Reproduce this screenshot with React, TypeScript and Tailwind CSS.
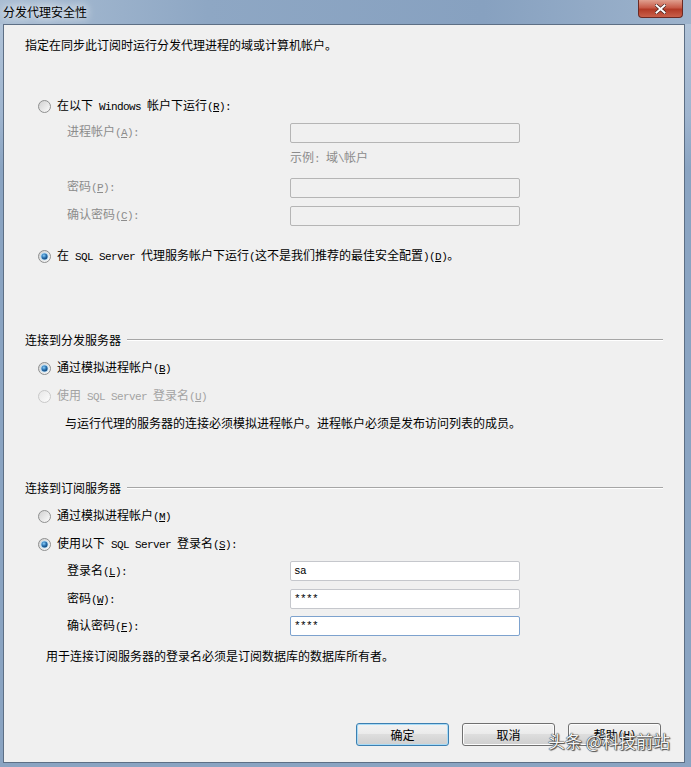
import React, { useId } from 'react';

const cjk = "font-['Noto_Sans_CJK_SC',sans-serif]";

// half-width ascii run, SimSun style (6px per char)
const A: React.FC<{ children: React.ReactNode }> = ({ children }) => (
  <span className="font-['Liberation_Mono',monospace] text-[11px] tracking-[-0.6px] whitespace-pre">{children}</span>
);

const Key: React.FC<{ k: string }> = ({ k }) => (
  <A>
    (<u className="underline-offset-1">{k}</u>)
  </A>
);

const Radio: React.FC<{ checked?: boolean; disabled?: boolean }> = ({ checked, disabled }) => {
  const id = useId().replace(/:/g, '');
  return (
    <svg width="13" height="13" viewBox="0 0 13 13" className="shrink-0">
      <defs>
        <linearGradient id={`f${id}`} x1="0" y1="0" x2="1" y2="1">
          <stop offset="0" stopColor={disabled ? '#e6e6e6' : '#cfcfcf'} />
          <stop offset="1" stopColor="#fdfdfd" />
        </linearGradient>
        <radialGradient id={`d${id}`} cx="0.4" cy="0.35" r="0.7">
          <stop offset="0" stopColor="#8fd0f7" />
          <stop offset="0.5" stopColor="#2f78b7" />
          <stop offset="1" stopColor="#0c3a6a" />
        </radialGradient>
      </defs>
      <circle cx="6.5" cy="6.5" r="6" fill={`url(#f${id})`} stroke={disabled ? '#c8c8c8' : '#8e8f8f'} />
      {checked && (
        <>
          <circle cx="6.5" cy="6.5" r="3.8" fill="#a9d7f5" />
          <circle cx="6.5" cy="6.5" r="3" fill={`url(#d${id})`} />
        </>
      )}
    </svg>
  );
};

const RadioRow: React.FC<{
  checked?: boolean;
  disabled?: boolean;
  mt: string;
  children: React.ReactNode;
}> = ({ checked, disabled, mt, children }) => (
  <div className={`${mt} h-[16px] flex items-center pl-[13px]`}>
    <Radio checked={checked} disabled={disabled} />
    <span className={`ml-[6px] whitespace-nowrap ${disabled ? 'text-[#a3a3a3]' : 'text-black'}`}>
      {children}
    </span>
  </div>
);

const GroupHeader: React.FC<{ title: string; mt: string }> = ({ title, mt }) => (
  <div className={`${mt} h-[16px] flex items-center pr-[21px]`}>
    <span className="whitespace-nowrap">{title}</span>
    <div className="flex-1 ml-[6px] h-px bg-[#a6a6a6] border-b border-white box-content" />
  </div>
);

const Field: React.FC<{
  label: React.ReactNode;
  mt: string;
  disabled?: boolean;
  value?: string;
  focused?: boolean;
  top?: boolean;
}> = ({ label, mt, disabled, value, focused, top }) => (
  <div className={`${mt} h-[20px] flex ${top ? 'items-start' : 'items-center'} pl-[42px]`}>
    <span className={`w-[223px] whitespace-nowrap leading-[16px] ${disabled ? 'text-[#8c8c8c]' : 'text-black'}`}>
      {label}
    </span>
    <div
      className={`w-[230px] h-[20px] rounded-[2px] border flex items-center px-[3px] ${
        disabled
          ? 'bg-[#f0f0f0] border-[#b5b5b5]'
          : focused
            ? 'bg-white border-[#7da2ce]'
            : 'bg-white border-[#c5c7cc]'
      }`}
    >
      {value && <A>{value}</A>}
    </div>
  </div>
);

const Button: React.FC<{ label: React.ReactNode; primary?: boolean }> = ({ label, primary }) => (
  <div
    className={`w-[93px] h-[23px] rounded-[3px] border flex items-center justify-center bg-[linear-gradient(#f2f2f2_0%,#ebebeb_45%,#dddddd_50%,#cfcfcf_100%)] ${
      primary ? 'border-[#3c7fb1] shadow-[inset_0_0_0_1px_#a8dbf6]' : 'border-[#707070] shadow-[inset_0_0_0_1px_#fcfcfc]'
    }`}
  >
    {label}
  </div>
);

export default function App() {
  return (
    <div
      className={`relative w-[691px] h-[767px] flex flex-col bg-[linear-gradient(#b4c6da_0%,#9fb5cf_15%,#8aa4c2_22%,#8aa4c2_100%)] text-[12px] text-black ${cjk}`}
    >
      {/* title bar */}
      <div className="h-[24px] flex items-start bg-[linear-gradient(90deg,#a9bdd3_0%,#8ea7c4_30%,#87a1c0_70%,#9db3cc_100%)]">
        <span className="ml-[3px] mt-[4px] leading-[16px] [text-shadow:0_0_8px_#ffffff,0_0_12px_#ffffff]">
          分发代理安全性
        </span>
        <div className="ml-auto mr-[8px] w-[45px] h-[18px] rounded-b-[4px] border border-t-0 border-[#6b2a24] bg-[linear-gradient(#e0a08f_0%,#c75b48_45%,#b23a26_55%,#c9604a_100%)] flex items-center justify-center">
          <svg width="11" height="10" viewBox="0 0 11 10">
            <path d="M1.5 1.5 L9.5 8.5 M9.5 1.5 L1.5 8.5" stroke="#3c1a16" strokeWidth="3.2" strokeLinecap="square" />
            <path d="M1.5 1.5 L9.5 8.5 M9.5 1.5 L1.5 8.5" stroke="#ffffff" strokeWidth="2" strokeLinecap="square" />
          </svg>
        </div>
      </div>

      {/* client area */}
      <div className="flex-1 ml-[3px] mr-[6px] mb-[4px] border border-[#5d6f85] bg-[#f0f0f0] flex flex-col pl-[21px] pt-[12px] leading-[16px]">
        <div className="h-[16px]">指定在同步此订阅时运行分发代理进程的域或计算机帐户。</div>

        <RadioRow mt="mt-[45px]">
          在以下<A> Windows </A>帐户下运行<Key k="R" />
          <A>:</A>
        </RadioRow>
        <Field
          mt="mt-[9px]"
          top
          disabled
          label={
            <>
              进程帐户<Key k="A" />
              <A>:</A>
            </>
          }
        />
        <div className="mt-[6px] h-[16px] pl-[265px] text-[#8c8c8c] whitespace-nowrap">
          示例<A>: </A>域<A>\</A>帐户
        </div>
        <Field
          mt="mt-[13px]"
          top
          disabled
          label={
            <>
              密码<Key k="P" />
              <A>:</A>
            </>
          }
        />
        <Field
          mt="mt-[8px]"
          top
          disabled
          label={
            <>
              确认密码<Key k="C" />
              <A>:</A>
            </>
          }
        />

        <RadioRow mt="mt-[22px]" checked>
          在<A> SQL Server </A>代理服务帐户下运行<A>(</A>这不是我们推荐的最佳安全配置<A>)</A>
          <Key k="D" />。
        </RadioRow>

        <GroupHeader mt="mt-[68px]" title="连接到分发服务器" />
        <RadioRow mt="mt-[12px]" checked>
          通过模拟进程帐户<Key k="B" />
        </RadioRow>
        <RadioRow mt="mt-[12px]" disabled>
          使用<A> SQL Server </A>登录名<Key k="U" />
        </RadioRow>
        <div className="mt-[11px] h-[16px] pl-[40px] whitespace-nowrap">
          与运行代理的服务器的连接必须模拟进程帐户。进程帐户必须是发布访问列表的成员。
        </div>

        <GroupHeader mt="mt-[49px]" title="连接到订阅服务器" />
        <RadioRow mt="mt-[12px]">
          通过模拟进程帐户<Key k="M" />
        </RadioRow>
        <RadioRow mt="mt-[12px]" checked>
          使用以下<A> SQL Server </A>登录名<Key k="S" />
          <A>:</A>
        </RadioRow>
        <Field
          mt="mt-[9px]"
          value="sa"
          label={
            <>
              登录名<Key k="L" />
              <A>:</A>
            </>
          }
        />
        <Field
          mt="mt-[8px]"
          value="****"
          label={
            <>
              密码<Key k="W" />
              <A>:</A>
            </>
          }
        />
        <Field
          mt="mt-[7px]"
          value="****"
          focused
          label={
            <>
              确认密码<Key k="F" />
              <A>:</A>
            </>
          }
        />
        <div className="mt-[12px] h-[16px] pl-[21px] whitespace-nowrap">
          用于连接订阅服务器的登录名必须是订阅数据库的数据库所有者。
        </div>

        <div className="mt-[59px] flex justify-end gap-[13px] pr-[23px]">
          <Button primary label="确定" />
          <Button label="取消" />
          <Button
            label={
              <>
                帮助<Key k="H" />
              </>
            }
          />
        </div>
      </div>

      {/* watermark */}
      <div className="absolute left-[548px] top-[730px] text-[17px] leading-[22px] text-[#f4f4f4] whitespace-nowrap [text-shadow:0_0_1px_#222,0_0_1px_#222,1px_1px_1px_#555]">
        头条 @科技前站
      </div>
    </div>
  );
}
